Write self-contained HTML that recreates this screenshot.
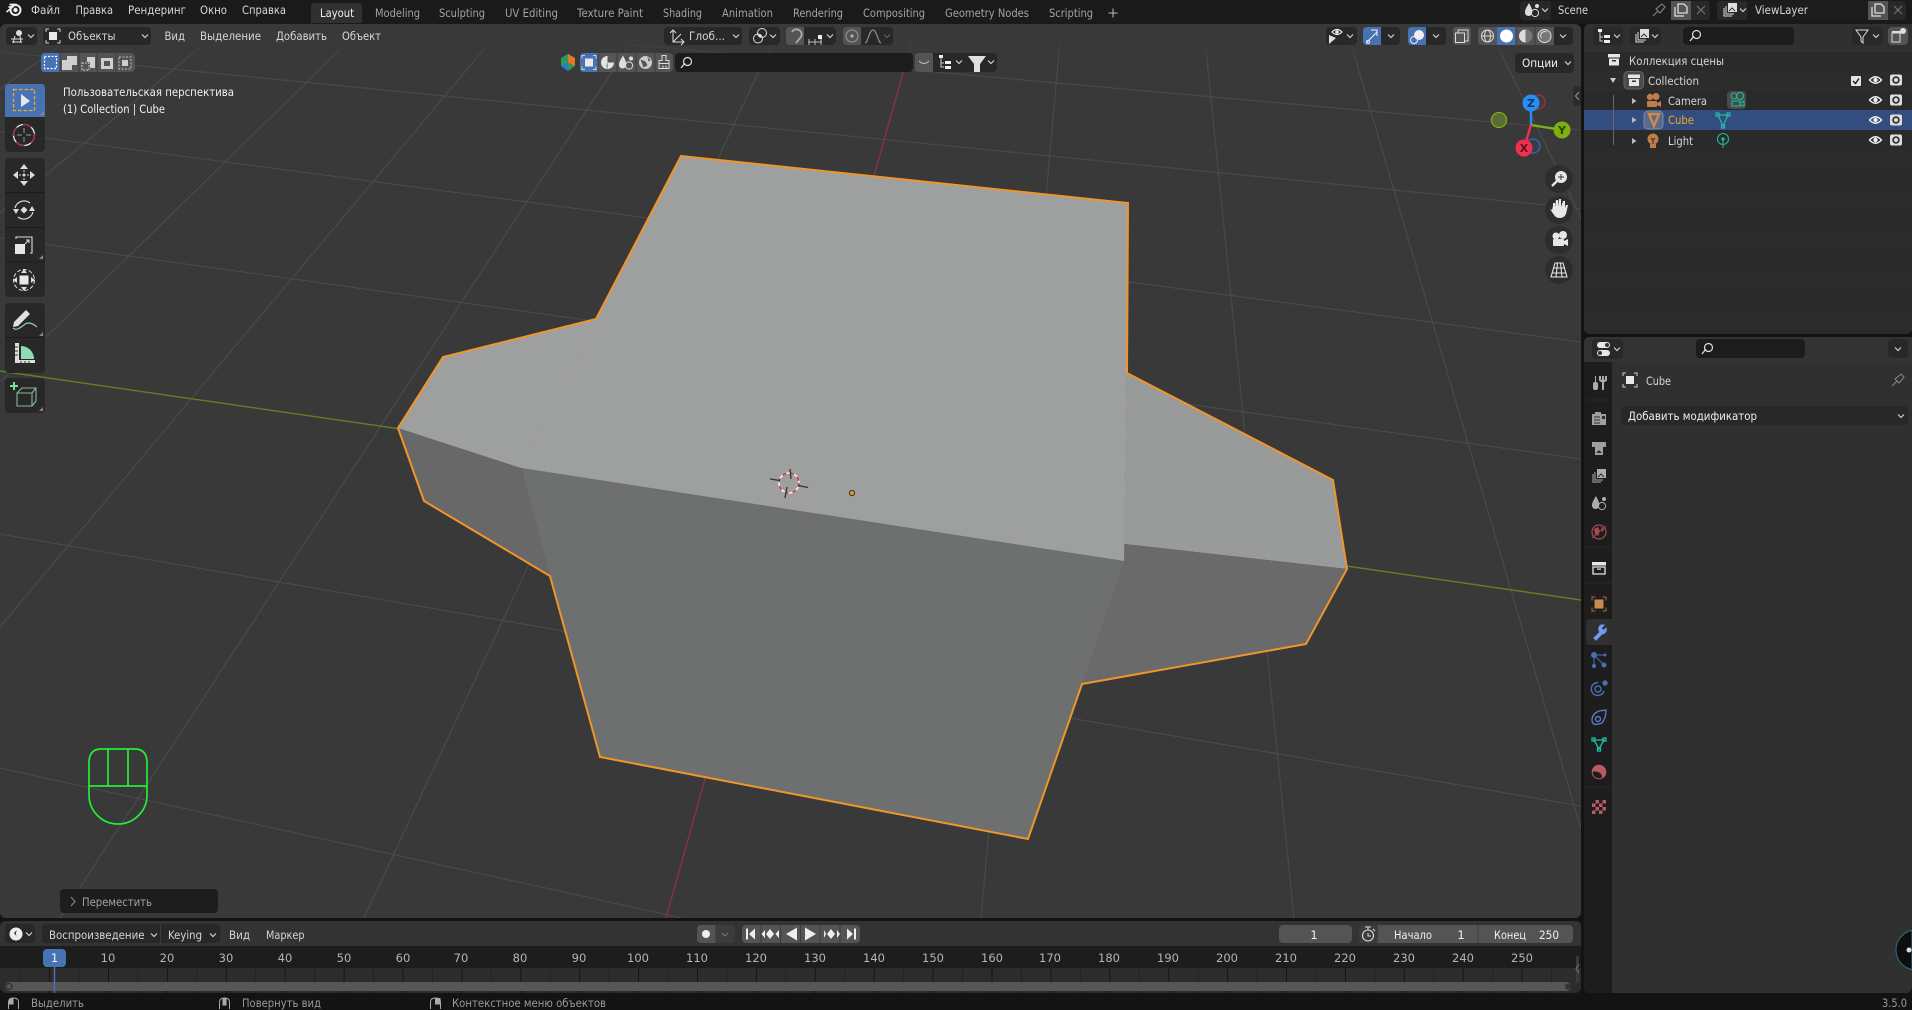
<!DOCTYPE html>
<html lang="ru"><head><meta charset="utf-8"><title>Blender</title>
<style>
html,body{margin:0;padding:0;background:#131313;width:1912px;height:1010px;overflow:hidden}
svg{display:block}
text{font-family:"DejaVu Sans","Liberation Sans",sans-serif;font-size:11.5px;fill:#cfcfcf}
.m{fill:#d6d6d6}.d{fill:#a3a3a3}.w{fill:#f0f0f0}.n{fill:#b5b5b5;text-anchor:middle}.g{fill:#9a9a9a}
</style></head><body>
<svg width="1912" height="1010" viewBox="0 0 1912 1010" xmlns="http://www.w3.org/2000/svg" style="overflow:hidden">
<defs>
<clipPath id="vp"><rect x="0" y="24" width="1581" height="894" rx="6"/></clipPath>
<linearGradient id="fade" x1="0" y1="0" x2="0" y2="1"><stop offset="0" stop-color="#393939"/><stop offset=".35" stop-color="#393939"/><stop offset="1" stop-color="#393939" stop-opacity="0"/></linearGradient>
<pattern id="ticks" patternUnits="userSpaceOnUse" width="58.9" height="30" patternTransform="translate(108 0)"><rect x="0" width="1" height="30" fill="#141414"/><rect x="29.4" width="1" height="30" fill="#222"/></pattern>
<path id="c" d="M-3-1.500L0 1.500L3-1.500" fill="none" stroke="#cfcfcf" stroke-width="1.200"/>
<g id="obj"><rect x="-4" y="-4" width="8" height="8" fill="#e8e8e8"/><path d="M-7-4V-7H-4M4-7H7V-4M7 4V7H4M-4 7H-7V4" fill="none" stroke="#d0d0d0"/></g>
<g id="eye"><path d="M-6 0Q0-6.500 6 0Q0 6.500-6 0Z" fill="none" stroke="#eee" stroke-width="1.400"/><circle r="2.200" fill="#eee"/></g>
<g id="rcam"><rect x="-6" y="-5.500" width="12" height="11" rx="2" fill="#ddd"/><circle r="3.800" fill="#333"/><circle r="2" fill="#ddd"/></g>
<g id="srch"><circle cx="1.500" cy="-1.500" r="4" fill="none" stroke="#ddd" stroke-width="1.200"/><path d="M-1-0L-5 5" stroke="#ddd" stroke-width="1.300"/></g>
<g id="box"><rect x="-6" y="-6" width="12" height="3.500" fill="#e6e6e6"/><path d="M-5-1.500H5V5.500H-5Z" fill="#e6e6e6"/><rect x="-2" y="0" width="4" height="1.500" fill="#333"/></g>
<g id="copy"><path d="M-3-6H3L6-3V3H-3Z" fill="none" stroke="#ddd" stroke-width="1.300"/><path d="M-6-3V6H3" fill="none" stroke="#ddd" stroke-width="1.300"/></g>
<path id="x" d="M-4-4L4 4M4-4L-4 4" stroke="#777" stroke-width="1.100"/>
<path id="pin" d="M-6 6L-1 1M-3-1L3-6L6-3L1 3Z" fill="none" stroke="#888" stroke-width="1"/>
<g id="scene"><path d="M-3-7C-6-2-7 0-7 2A3.500 3.500 0 0 0 0 3C1 0-1-3-3-7Z" fill="#ddd"/><circle cx="5" cy="-4" r="2" fill="#ddd"/><circle cx="3" cy="3" r="3.600" fill="none" stroke="#ddd"/></g>
<g id="layers"><rect x="-2" y="-7" width="9" height="9" fill="#ddd"/><path d="M-4-4V4H4M-6-2V6H2" fill="none" stroke="#ddd"/><path d="M-1 1L2-2L5 1" stroke="#333" fill="none"/></g>
<g id="tree"><rect x="-6" y="-7" width="4" height="3" fill="#eee"/><path d="M-4-4V5H-1M-4 1H-1" fill="none" stroke="#ccc"/><rect x="0" y="-1" width="6" height="3" fill="#eee"/><rect x="0" y="4" width="6" height="3" fill="#eee"/></g>
<path id="corner" d="M0 0L4 0L4-4Z" fill="#888"/>
</defs>

<rect width="1912" height="1010" fill="#131313"/>
<!-- top bar -->
<rect width="1912" height="24" fill="#1a1a1a"/>
<g transform="translate(15.500 10)" fill="none" stroke="#eee"><circle r="5" stroke-width="2"/><circle r="2.200" fill="#eee" stroke="none"/><path d="M-9 2L-3-3H-7M-6-5.500H1" stroke-width="1.700"/></g>
<text class="m" x="31" y="14" textLength="29" lengthAdjust="spacingAndGlyphs">Файл</text>
<text class="m" x="75.500" y="14" textLength="37.500" lengthAdjust="spacingAndGlyphs">Правка</text>
<text class="m" x="128" y="14" textLength="58" lengthAdjust="spacingAndGlyphs">Рендеринг</text>
<text class="m" x="200" y="14" textLength="27" lengthAdjust="spacingAndGlyphs">Окно</text>
<text class="m" x="242" y="14" textLength="44" lengthAdjust="spacingAndGlyphs">Справка</text>
<path d="M311 23V7Q311 3 315 3H358Q362 3 362 7V23Z" fill="#303030"/>
<text class="w" x="320" y="17" textLength="34" lengthAdjust="spacingAndGlyphs">Layout</text>
<text class="d" x="375" y="17" textLength="45" lengthAdjust="spacingAndGlyphs">Modeling</text>
<text class="d" x="439" y="17" textLength="46" lengthAdjust="spacingAndGlyphs">Sculpting</text>
<text class="d" x="505" y="17" textLength="53" lengthAdjust="spacingAndGlyphs">UV Editing</text>
<text class="d" x="577" y="17" textLength="66" lengthAdjust="spacingAndGlyphs">Texture Paint</text>
<text class="d" x="663" y="17" textLength="39" lengthAdjust="spacingAndGlyphs">Shading</text>
<text class="d" x="722" y="17" textLength="51" lengthAdjust="spacingAndGlyphs">Animation</text>
<text class="d" x="793" y="17" textLength="50" lengthAdjust="spacingAndGlyphs">Rendering</text>
<text class="d" x="863" y="17" textLength="62" lengthAdjust="spacingAndGlyphs">Compositing</text>
<text class="d" x="945" y="17" textLength="84" lengthAdjust="spacingAndGlyphs">Geometry Nodes</text>
<text class="d" x="1049" y="17" textLength="44" lengthAdjust="spacingAndGlyphs">Scripting</text>
<path d="M1113 8.500V17.500M1108.500 13H1117.500" stroke="#bbb" stroke-width="1"/>
<!-- scene selectors -->
<rect x="1520" y="1" width="190" height="19" rx="4" fill="#282828"/>
<rect x="1551" y="1" width="130" height="19" fill="#1c1c1c"/>
<rect x="1671" y="1" width="20" height="19" fill="#545454"/>
<use href="#scene" x="1532" y="10"/><use href="#c" x="1545" y="10"/>
<text class="m" x="1558" y="14" textLength="30" lengthAdjust="spacingAndGlyphs">Scene</text>
<use href="#pin" x="1659" y="10"/><use href="#copy" x="1681" y="10"/><use href="#x" x="1701" y="10"/>
<rect x="1717" y="1" width="189" height="19" rx="4" fill="#282828"/>
<rect x="1747" y="1" width="131" height="19" fill="#1c1c1c"/>
<rect x="1868" y="1" width="20" height="19" fill="#545454"/>
<use href="#layers" x="1730" y="10"/><use href="#c" x="1743" y="10"/>
<text class="m" x="1755" y="14" textLength="53" lengthAdjust="spacingAndGlyphs">ViewLayer</text>
<use href="#copy" x="1878" y="10"/><use href="#x" x="1898" y="10"/>

<!-- 3D viewport -->
<rect x="0" y="24" width="1581" height="894" rx="6" fill="#393939"/>
<g clip-path="url(#vp)">
<g stroke="#4b4b4b" stroke-width="1.100" fill="none">
<path d="M82 30L0 89M221 30L0 213M360 30L0 382M500 30L0 627M639 30L60 918M778 30L364 918M1061 30L981 918M1204 30L1294 918M1347 30L1581 829M1490 30L1581 218"/>
<path d="M400 24L1581 130M0 52L1581 208.500M0 132L1581 342M0 238L1581 459M0 534L1581 806M0 768L682 918"/>
</g>
<path d="M0 371L1581 600" stroke="#617f26" stroke-width="1.400"/>
<path d="M915 30L666 918" stroke="#8c3042" stroke-width="1.400"/>
<rect x="0" y="24" width="1581" height="40" fill="url(#fade)"/>
<!-- mesh -->
<polygon points="398,428 443,357 596,319 521,468" fill="#9e9f9f" stroke="#9e9f9f" stroke-width="1"/>
<polygon points="398,428 521,468 550,576 424,501" fill="#686868"/>
<polygon points="1127,373 1333,480 1347,569 1124,544" fill="#999a9a"/>
<polygon points="1124,544 1347,569 1306,644 1082,684" fill="#6a6a6a"/>
<polygon points="521,468 1124,561 1082,684 1028,839 600,757 550,576" fill="#6e706f"/>
<polygon points="681,156 1128,203 1127,373 1124,561 521,468 596,319" fill="#9e9f9f"/>
<path d="M681 156L1128 203L1127 373L1333 480L1347 569L1306 644L1082 684L1028 839L600 757L550 576L424 501L398 428L443 357L596 319Z" fill="none" stroke="#f0952a" stroke-width="2"/>
<!-- cursor and origin -->
<g transform="translate(789 483)"><circle r="10" fill="none" stroke="#f0f0f0" stroke-width="1.600"/><circle r="10" fill="none" stroke="#e23040" stroke-width="1.600" stroke-dasharray="4 4"/>
<path d="M-19-4L-9-2.500M9 2.500L19 4.500M1-14L2-4M-2 4L-4 15" stroke="#333" stroke-width="1.300"/></g>
<circle cx="852" cy="493" r="2.600" fill="#f09020" stroke="#333" stroke-width="1"/>
<!-- mouse gesture -->
<g fill="none" stroke="#22ee33" stroke-width="1.700"><path d="M101 749H135Q147 749 147 763V795A29 29 0 0 1 89 795V763Q89 749 101 749Z"/><path d="M89 786H147M108 749V786M128 749V786"/></g>
<!-- overlay text -->
<text class="w" x="63" y="96" textLength="171" lengthAdjust="spacingAndGlyphs">Пользовательская перспектива</text>
<text class="w" x="63" y="113" textLength="102" lengthAdjust="spacingAndGlyphs">(1) Collection | Cube</text>
<!-- last operator -->
<rect x="60" y="889" width="158" height="24" rx="4" fill="#1d1d1d"/>
<path d="M71 897L75 901.500L71 906" fill="none" stroke="#888" stroke-width="1.100"/>
<text class="d" x="82" y="906" textLength="70" lengthAdjust="spacingAndGlyphs">Переместить</text>
</g>

<!-- header row 1 left -->
<rect x="6" y="27" width="31" height="18" rx="4" fill="#282828"/>
<g transform="translate(17 36)" stroke="#ddd" fill="none"><path d="M-6 3H6M-5 6H5M-2 0L-4 7M3 0L4 7" stroke-width="1"/><circle cx="2" cy="-3" r="3" fill="#ddd" stroke="none"/></g>
<use href="#c" x="31" y="36"/>
<rect x="43" y="27" width="108" height="18" rx="4" fill="#282828"/>
<use href="#obj" x="53" y="36"/>
<text class="m" x="68" y="40" textLength="47.500" lengthAdjust="spacingAndGlyphs">Объекты</text>
<use href="#c" x="145" y="36"/>
<text class="m" x="164.500" y="40" textLength="20.500" lengthAdjust="spacingAndGlyphs">Вид</text>
<text class="m" x="200" y="40" textLength="61" lengthAdjust="spacingAndGlyphs">Выделение</text>
<text class="m" x="276" y="40" textLength="51" lengthAdjust="spacingAndGlyphs">Добавить</text>
<text class="m" x="342" y="40" textLength="39" lengthAdjust="spacingAndGlyphs">Объект</text>
<!-- header row 2 left -->
<rect x="41" y="53" width="94" height="19" rx="4" fill="#545454"/>
<path d="M45 53H60V72H45Q41 72 41 68V57Q41 53 45 53Z" fill="#4772b3"/>
<rect x="44.500" y="56.500" width="12" height="12" fill="none" stroke="#fff" stroke-width="1.200" stroke-dasharray="2 1.500"/>
<path d="M60 53V72M79 53V72M97 53V72M116 53V72" stroke="#3c3c3c"/>
<path d="M62 60H67V56H77V65H72V70H62Z" fill="#cfcfcf"/>
<rect x="82" y="63" width="7" height="7" fill="none" stroke="#ccc" stroke-dasharray="2 1"/><path d="M87 57H95V68H90V62H87Z" fill="#cfcfcf"/>
<rect x="101" y="58" width="12" height="11" fill="#cfcfcf"/><rect x="104" y="61" width="6" height="5" fill="#545454"/>
<rect x="119" y="57" width="12" height="12" fill="none" stroke="#bbb" stroke-dasharray="2 1.500"/><rect x="122" y="60" width="6" height="6" fill="#cfcfcf"/>
<!-- row 2 center -->
<polygon points="568,54 575,58 575,66 568,71 561,66 561,58" fill="#2a9a5a"/><polygon points="568,54 575,58 575,66 568,62.500" fill="#e8742a"/><polygon points="561,66 568,62.500 568,71" fill="#2a7ad0"/>
<rect x="580" y="53" width="93" height="19" rx="4" fill="#545454"/>
<path d="M584 53H598V72H584Q580 72 580 68V57Q580 53 584 53Z" fill="#4772b3"/><use href="#obj" x="589" y="62.500"/>
<path d="M598 53V72M617 53V72M636 53V72M655 53V72" stroke="#3c3c3c"/>
<g transform="translate(607.500 62.500)"><circle r="6.500" fill="#e4e4e4"/><path d="M0-6.500A6.500 6.500 0 0 1 6.500 0H0V6.500A6.500 6.500 0 0 1 0 0Z" fill="#555"/></g>
<use href="#scene" x="626" y="62.500"/>
<g transform="translate(645.500 62.500)"><circle r="6.500" fill="#ccc"/><path d="M-5-3L0-1L2 3L-2 5ZM2-6L5-2L3-1Z" fill="#555"/></g>
<g transform="translate(664 62.500)" fill="none" stroke="#ddd"><path d="M-2-7H2V-2H5V1H-5V-2H-2ZM-5 1V6H5V1M-1 6V3M2 6V3"/></g>
<rect x="675" y="53" width="238" height="19" rx="4" fill="#1c1c1c"/><use href="#srch" x="686" y="63"/>
<rect x="915" y="53" width="82" height="19" rx="4" fill="#282828"/>
<path d="M919 53H933V72H919Q915 72 915 68V57Q915 53 919 53Z" fill="#545454"/>
<path d="M919 61Q924 66 929 61" fill="none" stroke="#bbb"/>
<use href="#tree" x="945" y="62"/><use href="#c" x="959" y="62"/>
<path d="M968 56H986L980 64V72H974V64Z" fill="#e0e0e0"/><use href="#c" x="991" y="62"/>
<!-- row 1 center -->
<rect x="664" y="27" width="78" height="18" rx="4" fill="#282828"/>
<path d="M673 31V42H684M673 42L681 34M670 33L673 30L676 33M681 39L684 42L681 45" fill="none" stroke="#ddd" stroke-width="1"/>
<text class="m" x="689" y="40" textLength="36" lengthAdjust="spacingAndGlyphs">Глоб...</text><use href="#c" x="736" y="36"/>
<rect x="749" y="27" width="31" height="18" rx="4" fill="#282828"/>
<g fill="none" stroke="#ddd"><circle cx="758" cy="38.500" r="4.500"/><circle cx="762" cy="33" r="4.500"/></g><circle cx="760" cy="36" r="1.400" fill="#eee"/><use href="#c" x="773" y="36"/>
<rect x="786" y="27" width="50" height="18" rx="4" fill="#282828"/>
<path d="M790 27H804V45H790Q786 45 786 41V31Q786 27 790 27Z" fill="#545454"/>
<path d="M796 43L801 37A5 5 0 0 0 792 32" fill="none" stroke="#aaa" stroke-width="1.800"/>
<rect x="818" y="35" width="4" height="4" fill="#eee"/><path d="M808 42H822M809 39V45M815 39V45M821 39V45" stroke="#bbb"/><use href="#c" x="830" y="36"/>
<rect x="843" y="27" width="50" height="18" rx="4" fill="#282828"/>
<path d="M847 27H861V45H847Q843 45 843 41V31Q843 27 847 27Z" fill="#545454"/>
<circle cx="852" cy="36" r="6" fill="none" stroke="#999"/><circle cx="852" cy="36" r="1.500" fill="#bbb"/>
<path d="M865 43C868 43 869 30 873 30C877 30 878 43 881 43" fill="none" stroke="#999"/><path d="M884 34.500L887 37.500L890 34.500" fill="none" stroke="#666"/>
<!-- row 1 right -->
<rect x="1326" y="27" width="31" height="18" rx="4" fill="#282828"/>
<g transform="translate(1337 32)"><path d="M-5 0Q0-5 5 0Q0 5-5 0Z" fill="none" stroke="#eee" stroke-width="1.200"/><circle r="1.800" fill="#eee"/></g><path d="M1329 35V44L1336 38Z" fill="#ddd"/><use href="#c" x="1350" y="36"/>
<rect x="1363" y="27" width="37" height="18" rx="4" fill="#282828"/>
<path d="M1367 27H1381V45H1367Q1363 45 1363 41V31Q1363 27 1367 27Z" fill="#4772b3"/>
<path d="M1367 42L1377 32M1371 30H1377V36" fill="none" stroke="#eee" stroke-width="1.100"/><circle cx="1368" cy="42" r="1.500" fill="none" stroke="#eee"/><use href="#c" x="1391" y="36"/>
<rect x="1408" y="27" width="38" height="18" rx="4" fill="#282828"/>
<path d="M1412 27H1426V45H1412Q1408 45 1408 41V31Q1408 27 1412 27Z" fill="#4772b3"/>
<circle cx="1419" cy="35" r="5" fill="#eee"/><circle cx="1414" cy="40" r="3.500" fill="none" stroke="#eee"/><use href="#c" x="1436" y="36"/>
<rect x="1453" y="27" width="18" height="18" rx="3" fill="#545454"/>
<rect x="1458" y="30" width="10" height="11" fill="none" stroke="#ddd"/><rect x="1455.500" y="33" width="9" height="9.500" fill="#545454" stroke="#ddd"/>
<rect x="1478" y="27" width="95" height="18" rx="4" fill="#545454"/>
<rect x="1497" y="27" width="19" height="18" fill="#4772b3"/>
<path d="M1516 27V45M1535 27V45" stroke="#3c3c3c"/>
<path d="M1558 27H1569Q1573 27 1573 31V41Q1573 45 1569 45H1554V27Z" fill="#282828"/>
<g transform="translate(1487.500 36)" fill="none" stroke="#ddd"><circle r="6"/><ellipse rx="3" ry="6"/><path d="M-6 0H6"/></g>
<circle cx="1506.500" cy="36" r="6.500" fill="#fff"/>
<g transform="translate(1525.500 36)"><circle r="6.500" fill="#ddd"/><path d="M0-6.500A6.500 6.500 0 0 1 0 6.500Z" fill="#777"/></g>
<g transform="translate(1544.500 36)"><circle r="6.500" fill="#777" stroke="#ddd"/><path d="M-3 2A4 4 0 0 1 2-4" fill="none" stroke="#ddd"/></g>
<use href="#c" x="1563" y="36"/>
<rect x="1515" y="53" width="59" height="20" rx="4" fill="#282828"/>
<text class="w" x="1522" y="67" textLength="36" lengthAdjust="spacingAndGlyphs">Опции</text><use href="#c" x="1568" y="63"/>

<!-- toolbar -->
<rect x="5" y="84" width="40" height="68" rx="4" fill="#282828"/>
<path d="M9 84H41Q45 84 45 88V117H5V88Q5 84 9 84Z" fill="#4772b3"/>
<rect x="13.500" y="89.500" width="21" height="21" fill="none" stroke="#f5a623" stroke-width="1.300" stroke-dasharray="3.500 2"/>
<polygon points="21,94 21,107 30,101" fill="#e8e8e8"/><use href="#corner" x="40" y="115"/>
<g transform="translate(24 135)" fill="none"><circle r="10.500" stroke="#eee" stroke-width="1.300"/><circle r="10.500" stroke="#a03040" stroke-width="1.400" stroke-dasharray="9 7"/><path d="M0-7V-2M0 2V7M-7 0H-2M2 0H7" stroke="#999"/></g>
<rect x="5" y="158" width="40" height="139" rx="4" fill="#282828"/>
<path d="M5 192.500H45M5 227.500H45M5 262H45" stroke="#1c1c1c"/>
<g transform="translate(24 175)" fill="#ddd"><path d="M0-11L-4-6H4ZM0 11L-4 6H4ZM-11 0L-6-4V4ZM11 0L6-4V4Z"/><path d="M0-5V-3M0 3V5M-5 0H-3M3 0H5" stroke="#ddd"/><circle r="1.500"/></g>
<g transform="translate(24 210)"><path d="M-9-2A9.500 9.500 0 0 1 6-7M9 2A9.500 9.500 0 0 1-6 7" fill="none" stroke="#ddd" stroke-width="1.200"/><path d="M0-3.500L3.500 0L0 3.500L-3.500 0Z" fill="#ddd"/><path d="M8-4L11 1H5ZM-8 4L-11-1H-5Z" fill="#ddd"/></g>
<g transform="translate(24 245)"><path d="M-8-6V-8H8V8H6" fill="none" stroke="#ddd" stroke-width="1.100"/><rect x="-9" y="-1" width="10" height="10" fill="#e6e6e6"/><path d="M1-1L5-5M2-5H5V-2" fill="none" stroke="#ddd"/></g><use href="#corner" x="39" y="259"/>
<g transform="translate(24 280)"><circle r="10.500" fill="none" stroke="#ddd" stroke-dasharray="4 2"/><rect x="-4.500" y="-4.500" width="9" height="9" fill="#e8e8e8"/><path d="M0-11L-3-7H3ZM0 11L-3 7H3ZM-11 0L-7-3V3ZM11 0L7-3V3Z" fill="#ddd"/></g>
<rect x="5" y="303" width="40" height="70" rx="4" fill="#282828"/><path d="M5 337.500H45" stroke="#1c1c1c"/>
<g transform="translate(24 323)"><path d="M-11 5C-8 8-4 5 0 2C3-1 7-1 13 4" fill="none" stroke="#8fd3b0" stroke-width="1.200"/><path d="M-11 4L-10-1L2-13L6-9L-6 3Z" fill="#e0e0e0"/></g><use href="#corner" x="39" y="336"/>
<g transform="translate(24 355)"><path d="M-3 4V-9A13 13 0 0 1 10 4Z" fill="#8fdcb4"/><path d="M-9-12H-5V5H11V8H-9Z" fill="#ddd"/><path d="M-9-8H-6M-9-4H-6M-9 0H-6M-3 8V6M1 8V6M5 8V6" stroke="#333"/></g>
<rect x="5" y="378" width="40" height="35" rx="4" fill="#282828"/>
<path d="M17 393H32V406H17ZM17 393L22 388H36V401L32 406M32 393L36 388" fill="none" stroke="#86b89d" stroke-width="1.100"/>
<path d="M14 382V390M10 386H18" stroke="#7ee08a" stroke-width="2"/><use href="#corner" x="39" y="411"/>

<!-- nav gizmo -->
<path d="M1531 125V110" stroke="#2a8cf5" stroke-width="2.400"/>
<path d="M1531 125L1562 130" stroke="#7eb00f" stroke-width="2.400"/>
<path d="M1531 125L1524 148" stroke="#f0304f" stroke-width="2.400"/>
<circle cx="1538" cy="102" r="7" fill="#4a3a40" fill-opacity=".5" stroke="#a03045" stroke-width="1.300"/>
<circle cx="1533" cy="146" r="7" fill="#3a4050" fill-opacity=".5" stroke="#2a70c0" stroke-width="1.300"/>
<circle cx="1499" cy="120" r="7.500" fill="#5b6b35" stroke="#7eb00f" stroke-width="1.300"/>
<circle cx="1531" cy="103" r="8.500" fill="#2a8cf5"/><circle cx="1562" cy="130" r="8.500" fill="#7eb00f"/><circle cx="1524" cy="148" r="8.500" fill="#f0304f"/>
<text x="1531" y="107" text-anchor="middle" style="font-size:11px;font-weight:bold;fill:#123a60">Z</text>
<text x="1562" y="134" text-anchor="middle" style="font-size:11px;font-weight:bold;fill:#2f4206">Y</text>
<text x="1524" y="152" text-anchor="middle" style="font-size:11px;font-weight:bold;fill:#5c1020">X</text>
<rect x="1573" y="86" width="8" height="20" rx="3" fill="#2b2b2b"/><path d="M1579 92L1575.500 96L1579 100" fill="none" stroke="#999"/>
<g fill="#2d2d2d"><circle cx="1559" cy="179" r="14"/><circle cx="1559" cy="210" r="14"/><circle cx="1559" cy="240" r="14"/><circle cx="1559" cy="270" r="14"/></g>
<g transform="translate(1559 179)"><circle cx="2" cy="-2" r="6" fill="#e6e6e6"/><path d="M-1-2H5M2-5V1" stroke="#333"/><path d="M-2 2L-7 7" stroke="#e6e6e6" stroke-width="2.400"/></g>
<path d="M1552 210L1553 206V203H1555V207L1556 200H1558V207L1559 199H1561V207L1563 201H1565V208L1566 205H1568L1566 214Q1564 218 1560 218Q1556 218 1554 215L1550 209Z" fill="#e8e8e8"/>
<g transform="translate(1559 240)" fill="#e6e6e6"><circle cx="-3" cy="-4" r="3.500"/><circle cx="4" cy="-5" r="4"/><rect x="-6" y="-1" width="11" height="7" rx="1"/><path d="M5 1L9-1V6L5 4Z"/></g>
<g transform="translate(1559 270)" fill="none" stroke="#e6e6e6" stroke-width="1.100"><path d="M-4-7H4L8 7H-8ZM-6-2H6M-7 3H7M-1.500-7L-3 7M1.500-7L3 7"/></g>

<!-- outliner -->
<rect x="1584" y="24" width="328" height="310" rx="6" fill="#2a2a2a"/>
<path d="M1590 24H1912V52H1584V30Q1584 24 1590 24Z" fill="#303030"/>
<g fill="#2c2c2c"><rect x="1584" y="71" width="328" height="20"/><rect x="1584" y="150" width="328" height="20"/><rect x="1584" y="190" width="328" height="20"/><rect x="1584" y="230" width="328" height="20"/><rect x="1584" y="270" width="328" height="20"/><rect x="1584" y="310" width="328" height="20"/></g>
<rect x="1593" y="27" width="30" height="18" rx="4" fill="#282828"/><use href="#tree" x="1604" y="36"/><use href="#c" x="1617" y="36"/>
<rect x="1630" y="27" width="31" height="18" rx="4" fill="#282828"/><use href="#layers" x="1642" y="36"/><use href="#c" x="1655" y="36"/>
<rect x="1683" y="27" width="111" height="18" rx="4" fill="#1c1c1c"/><use href="#srch" x="1695" y="36"/>
<rect x="1852" y="27" width="31" height="18" rx="4" fill="#282828"/><path d="M1856 30H1868L1863 37V43L1861 41V37Z" fill="none" stroke="#ddd"/><use href="#c" x="1876" y="36"/>
<rect x="1888" y="27" width="20" height="18" rx="4" fill="#545454"/><rect x="1892" y="33" width="8" height="9" fill="none" stroke="#ddd"/><rect x="1892" y="31" width="9" height="2.500" fill="#ddd"/><circle cx="1903" cy="31" r="3" fill="#ddd"/>
<rect x="1584" y="110" width="328" height="20" fill="#334d80"/>
<use href="#box" x="1614" y="60"/><text class="m" x="1629" y="65" textLength="95" lengthAdjust="spacingAndGlyphs">Коллекция сцены</text>
<path d="M1610 78H1616L1613 83Z" fill="#ccc"/>
<rect x="1624" y="71.500" width="19.500" height="17.500" rx="4" fill="#4a4a4a" stroke="#666"/><use href="#box" x="1634" y="80.500"/>
<text class="m" x="1648" y="85" textLength="51" lengthAdjust="spacingAndGlyphs">Collection</text>
<rect x="1851" y="76" width="10" height="10" rx="1" fill="#e4e4e4"/><path d="M1853 81L1855.500 83.500L1859 78.500" fill="none" stroke="#222" stroke-width="1.500"/>
<path d="M1613.500 95V145" stroke="#666"/>
<g fill="#bbb"><path d="M1632 98V104L1636.500 101Z"/><path d="M1632 117V123L1636.500 120Z"/><path d="M1632 138V144L1636.500 141Z"/></g>
<g transform="translate(1653 101)" fill="#bf7d4a"><circle cx="-3" cy="-4" r="3.200"/><circle cx="3" cy="-4.500" r="3.500"/><rect x="-6" y="0" width="10" height="6" rx="1"/><path d="M4 2L8 0V6L4 4Z"/></g>
<rect x="1644" y="111" width="19" height="18" rx="4" fill="#5a6a8c" stroke="#7a8aa8"/><path d="M1649 114H1659L1654 126Z" fill="none" stroke="#d08a4a" stroke-width="2.400"/>
<g transform="translate(1653 141)"><circle cx="0" cy="-2" r="5.500" fill="#bf7d4a"/><path d="M-3 3H3V7H-3Z" fill="#bf7d4a"/><path d="M-2-3L0-1L2-3M0-1V3" fill="none" stroke="#2a2a2a"/></g>
<text class="m" x="1668" y="105" textLength="39" lengthAdjust="spacingAndGlyphs">Camera</text>
<text x="1668" y="124" textLength="26" lengthAdjust="spacingAndGlyphs" style="fill:#f5a623">Cube</text>
<text class="m" x="1668" y="145" textLength="25" lengthAdjust="spacingAndGlyphs">Light</text>
<rect x="1727" y="91" width="19" height="18" rx="4" fill="#4a4a4a"/>
<g transform="translate(1737 100)" fill="none" stroke="#1fb89a" stroke-width="1.100"><circle cx="-3" cy="-4" r="3"/><circle cx="3" cy="-4" r="3.500"/><rect x="-5" y="1" width="8" height="5"/><path d="M3 3L7 1V6L3 5"/></g>
<g transform="translate(1723 120)" fill="none" stroke="#1fc0a0" stroke-width="1.200"><path d="M-5-5H5L0 6Z"/><rect x="-7" y="-7" width="3" height="3"/><rect x="4" y="-7" width="3" height="3"/><rect x="-1.500" y="5" width="3" height="3"/></g>
<g transform="translate(1723 141)" fill="none" stroke="#1fb89a" stroke-width="1.100"><circle cy="-2" r="5.500"/><path d="M0-2V7"/><circle cy="-2" r="1.200" fill="#1fb89a"/></g>
<use href="#eye" x="1875.500" y="80"/><use href="#eye" x="1875.500" y="100"/><use href="#eye" x="1875.500" y="120"/><use href="#eye" x="1875.500" y="140"/>
<use href="#rcam" x="1896" y="80"/><use href="#rcam" x="1896" y="100"/><use href="#rcam" x="1896" y="120"/><use href="#rcam" x="1896" y="140"/>

<!-- properties -->
<rect x="1584" y="337" width="328" height="656" rx="6" fill="#303030"/>
<path d="M1590 337H1912V362H1584V343Q1584 337 1590 337Z" fill="#333"/>
<path d="M1584 362H1612V993H1590Q1584 993 1584 987Z" fill="#1d1d1d"/>
<rect x="1592" y="339" width="31" height="20" rx="4" fill="#282828"/>
<rect x="1597" y="342" width="13" height="6" rx="3" fill="#e6e6e6"/><circle cx="1607" cy="345" r="2" fill="#333"/><rect x="1597" y="350" width="13" height="6" rx="3" fill="#e6e6e6"/><circle cx="1600" cy="353" r="2" fill="#333"/><use href="#c" x="1617" y="349"/>
<rect x="1696" y="339" width="109" height="19" rx="4" fill="#1c1c1c"/><use href="#srch" x="1707" y="349"/>
<rect x="1888" y="339" width="20" height="19" rx="4" fill="#282828"/><use href="#c" x="1898" y="349"/>
<use href="#obj" x="1630" y="380"/><text class="m" x="1646" y="385" textLength="25" lengthAdjust="spacingAndGlyphs">Cube</text><use href="#pin" x="1898" y="380"/>
<rect x="1621" y="406" width="287" height="19" rx="4" fill="#282828"/><text class="w" x="1628" y="420" textLength="129" lengthAdjust="spacingAndGlyphs">Добавить модификатор</text><use href="#c" x="1901" y="416"/>
<!-- tab icons -->
<g opacity=".75">
<g transform="translate(1599 383)"><rect x="-6" y="-1" width="5" height="8" rx="2" fill="#ddd"/><path d="M-3.500-7V-1" stroke="#ddd"/><path d="M4-7V7M1-7V-3Q4 0 7-3V-7" fill="none" stroke="#ddd" stroke-width="2"/></g>
<g transform="translate(1599 419)"><rect x="-7" y="-5" width="14" height="11" fill="#ccc"/><rect x="-4" y="-7" width="6" height="2" fill="#ccc"/><path d="M-5-2H1M-5 1H1M-5 4H1" stroke="#333"/><rect x="3" y="-3" width="3" height="3" fill="#333"/></g>
<g transform="translate(1599 448)"><rect x="-7" y="-6" width="14" height="5" fill="#ccc"/><rect x="-4" y="-1" width="8" height="8" fill="#ccc"/><path d="M-3 5L0 2L3 5Z" fill="#333"/></g>
<use href="#layers" x="1599" y="476"/>
<use href="#scene" x="1599" y="503"/>
</g>
<path d="M1585 400H1612" stroke="#262626"/>
<g transform="translate(1599 532)"><circle r="7" fill="#1d1d1d" stroke="#a8484f" stroke-width="1.200"/><path d="M-5-3L-1-5L1-1L-1 4L-4 2ZM2-6L5-2L3 0Z" fill="#a8484f"/><path d="M-7 6L7-6" stroke="#a8484f"/></g>
<path d="M1585 547H1612M1585 583H1612M1585 787H1612" stroke="#262626"/>
<g transform="translate(1599 568)"><rect x="-7" y="-6" width="14" height="3.500" fill="#e6e6e6"/><path d="M-6-1H6V6H-6Z" fill="none" stroke="#e6e6e6" stroke-width="1.300"/><rect x="-2" y="0.500" width="4" height="1.200" fill="#e6e6e6"/></g>
<g transform="translate(1599 604)"><rect x="-4.500" y="-4.500" width="9" height="9" fill="#c88a4a"/><path d="M-7-3.500V-7H-3.500M3.500-7H7V-3.500M7 3.500V7H3.500M-3.500 7H-7V3.500" fill="none" stroke="#a07040"/></g>
<path d="M1590 619H1612V645H1590Q1586 645 1586 641V623Q1586 619 1590 619Z" fill="#303030"/>
<path d="M1594 638L1600 632A4.500 4.500 0 0 1 1601 625L1604 625L1601 628.500L1604 630.500L1606 628A4.500 4.500 0 0 1 1602 634L1596 640Z" fill="#6f9cf2" stroke="#6f9cf2"/>
<g transform="translate(1599 660)" fill="#4a6fb5" stroke="#4a6fb5"><circle cx="-5" cy="-5" r="2.500"/><circle cx="5" cy="5" r="2"/><circle cx="-5" cy="6" r="1.500"/><circle cx="6" cy="-5" r="1"/><path d="M-5-5L5 5M-5-5V6M-5-5H6" fill="none"/></g>
<g transform="translate(1599 688)" fill="none" stroke="#4a6fb5" stroke-width="1.400"><circle cx="-1" cy="1" r="3"/><path d="M5 3A6.500 6.500 0 1 1-1-5.500"/><circle cx="6" cy="-5" r="2" fill="#4a6fb5"/></g>
<g transform="translate(1599 717)" fill="none" stroke="#5a80d0" stroke-width="1.300"><circle cx="-1" cy="2" r="2.500"/><path d="M-7 3Q-7-3 0-6L7-7Q7 1 3 6Q-2 8-5 7Q-7 6-7 3Z"/></g>
<g transform="translate(1599 744)" fill="none" stroke="#1fc0a0" stroke-width="1.300"><path d="M-5-4H5L0 5Z"/><rect x="-7" y="-6" width="3" height="3"/><rect x="4" y="-6" width="3" height="3"/><rect x="-1.500" y="4" width="3" height="3"/></g>
<g transform="translate(1599 772)"><circle r="6.800" fill="#1d1d1d" stroke="#b85a60" stroke-width="1"/><path d="M-7 0A7 7 0 0 1 7 0Q7 5 3 6Q3 1-1 0Q-4-1-7 0Z" fill="#b85a60"/></g>
<g transform="translate(1599 807)"><rect x="-7" y="-7" width="14" height="14" fill="#b85a60"/><path d="M-7-7h3.500v3.500h-3.500zM0-7h3.500v3.500h-3.500zM-3.500-3.500h3.500v3.500h-3.500zM3.500-3.500h3.500v3.500h-3.500zM-7 0h3.500v3.500h-3.500zM0 0h3.500v3.500h-3.500zM-3.500 3.500h3.500v3.500h-3.500zM3.500 3.500h3.500v3.500h-3.500z" fill="#1d1d1d"/></g>
<path d="M1912 930.400A20 20 0 0 0 1912 969.600Z" fill="#0e0e0e" stroke="#2f6f80"/><circle cx="1909" cy="950" r="2.500" fill="#ddd"/>

<!-- timeline -->
<rect x="0" y="921" width="1581" height="72" rx="6" fill="#2c2c2c"/>
<path d="M6 921H1575Q1581 921 1581 927V946H0V927Q0 921 6 921Z" fill="#333"/>
<rect x="0" y="946" width="1581" height="22" fill="#1d1d1d"/>
<rect x="0" y="968" width="1578" height="25" fill="url(#ticks)"/>
<rect x="5" y="982" width="1566" height="9" rx="4.500" fill="#565656"/>
<circle cx="9" cy="986.500" r="3" fill="none" stroke="#2c2c2c" stroke-width="1.200"/><circle cx="1568" cy="986.500" r="3" fill="#333"/>
<rect x="1576" y="956" width="3" height="27" rx="1.500" fill="#3a3a3a"/>
<path d="M1579 964L1576 968.500L1579 973" fill="none" stroke="#777"/>
<rect x="5" y="924" width="30" height="19" rx="4" fill="#282828"/>
<g transform="translate(16 934)"><circle r="6.500" fill="#eee"/><path d="M2-5L-2-1L2 4A6 6 0 0 1 2-5Z" fill="#333"/></g><use href="#c" x="29" y="934"/>
<rect x="42" y="924" width="178" height="19" rx="4" fill="#282828"/><path d="M160.500 924V943" stroke="#3c3c3c"/>
<text class="m" x="49" y="939" textLength="95.500" lengthAdjust="spacingAndGlyphs">Воспроизведение</text><use href="#c" x="154" y="935"/>
<text class="m" x="168" y="939" textLength="34" lengthAdjust="spacingAndGlyphs">Keying</text><use href="#c" x="213" y="935"/>
<text class="m" x="229" y="939" textLength="21" lengthAdjust="spacingAndGlyphs">Вид</text>
<text class="m" x="266" y="939" textLength="38.500" lengthAdjust="spacingAndGlyphs">Маркер</text>
<rect x="697" y="925" width="38" height="18" rx="4" fill="#3c3c3c"/><path d="M701 925H715.500V943H701Q697 943 697 939V929Q697 925 701 925Z" fill="#545454"/><circle cx="706" cy="934" r="4" fill="#eee"/>
<path d="M722 933L725 936L728 933" fill="none" stroke="#777"/>
<rect x="742" y="925" width="118" height="18" rx="4" fill="#545454"/>
<path d="M761 925V943M780.500 925V943M800.500 925V943M820 925V943M840 925V943" stroke="#3c3c3c"/>
<g fill="#eee"><rect x="746" y="928.500" width="2" height="11"/><path d="M755 928.500V939.500L749 934Z"/>
<path d="M770 929L774 934L770 939L766 934Z"/><path d="M779 930V938L775.500 934ZM765 930V938L761.500 934Z"/>
<path d="M797 927.500V940.500L786 934Z"/><path d="M805 927.500V940.500L816 934Z"/>
<path d="M831 929L835 934L831 939L827 934Z"/><path d="M824 930V938L826 934ZM837 930V938L840 934Z"/>
<path d="M847 928.500V939.500L853 934Z"/><rect x="854" y="928.500" width="2" height="11"/></g>
<rect x="1279" y="925" width="73" height="18" rx="4" fill="#545454"/>
<text class="w" x="1314" y="939" text-anchor="middle">1</text>
<rect x="1359" y="925" width="214" height="18" rx="4" fill="#545454"/>
<path d="M1359 929Q1359 925 1363 925H1378V943H1363Q1359 943 1359 939Z" fill="#3c3c3c"/>
<circle cx="1368" cy="935.500" r="5.500" fill="none" stroke="#ddd" stroke-width="1.100"/><path d="M1365 927H1371M1368 933V936L1371 936M1368 927V930M1373 929L1375 931" stroke="#ddd" fill="none"/>
<path d="M1478 925V943" stroke="#3c3c3c"/>
<text class="w" x="1394" y="939" textLength="38" lengthAdjust="spacingAndGlyphs">Начало</text>
<text class="w" x="1461" y="939" text-anchor="middle">1</text>
<text class="w" x="1494" y="939" textLength="32" lengthAdjust="spacingAndGlyphs">Конец</text>
<text class="w" x="1539" y="939" textLength="20" lengthAdjust="spacingAndGlyphs">250</text>
<g><text class="n" x="108" y="962">10</text><text class="n" x="167" y="962">20</text><text class="n" x="226" y="962">30</text><text class="n" x="285" y="962">40</text><text class="n" x="344" y="962">50</text><text class="n" x="403" y="962">60</text><text class="n" x="461" y="962">70</text><text class="n" x="520" y="962">80</text><text class="n" x="579" y="962">90</text><text class="n" x="638" y="962">100</text><text class="n" x="697" y="962">110</text><text class="n" x="756" y="962">120</text><text class="n" x="815" y="962">130</text><text class="n" x="874" y="962">140</text><text class="n" x="933" y="962">150</text><text class="n" x="992" y="962">160</text><text class="n" x="1050" y="962">170</text><text class="n" x="1109" y="962">180</text><text class="n" x="1168" y="962">190</text><text class="n" x="1227" y="962">200</text><text class="n" x="1286" y="962">210</text><text class="n" x="1345" y="962">220</text><text class="n" x="1404" y="962">230</text><text class="n" x="1463" y="962">240</text><text class="n" x="1522" y="962">250</text></g>
<rect x="43" y="949" width="23" height="18" rx="4" fill="#4772b3"/>
<text class="w" x="54.500" y="962" text-anchor="middle">1</text>
<path d="M54.500 967V993" stroke="#4772b3" stroke-width="1.500"/>

<!-- status bar -->
<g fill="none" stroke="#aaa"><path d="M8.500 1009V1002Q8.500 998 13.500 998Q18.500 998 18.500 1002V1009"/><path d="M9 1004V1000L13 998.500V1004Z" fill="#aaa"/>
<path d="M219.500 1009V1002Q219.500 998 224.500 998Q229.500 998 229.500 1002V1009"/><rect x="223" y="999" width="3" height="6" fill="#aaa"/>
<path d="M430.500 1009V1002Q430.500 998 435.500 998Q440.500 998 440.500 1002V1009"/><path d="M435.500 998.500H440V1004H435.500Z" fill="#aaa"/></g>
<text class="g" x="31" y="1007" textLength="53" lengthAdjust="spacingAndGlyphs">Выделить</text>
<text class="g" x="242" y="1007" textLength="79" lengthAdjust="spacingAndGlyphs">Повернуть вид</text>
<text class="g" x="452" y="1007" textLength="154" lengthAdjust="spacingAndGlyphs">Контекстное меню объектов</text>
<text class="g" x="1882" y="1007" textLength="25" lengthAdjust="spacingAndGlyphs">3.5.0</text>
</svg>
</body></html>
